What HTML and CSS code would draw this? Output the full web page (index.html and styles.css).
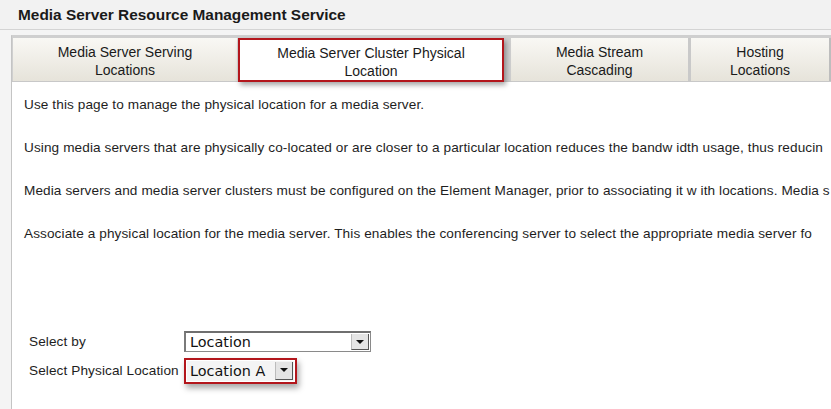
FILE: index.html
```html
<!DOCTYPE html>
<html>
<head>
<meta charset="utf-8">
<link rel="stylesheet" href="styles.css">
</head>
<body>
<div class="titlebar">Media Server Resource Management Service</div>
<div class="main">
  <div class="panel">
    <div class="tabs">
      <div class="tab t1">Media Server Serving<br>Locations</div>
      <div class="tab t2 active">Media Server Cluster Physical<br>Location</div>
      <div class="tab t3">Media Stream<br>Cascading</div>
      <div class="tab t4">Hosting<br>Locations</div>
    </div>
    <div class="content">
      <p>Use this page to manage the physical location for a media server.</p>
      <p>Using media servers that are physically co-located or are closer to a particular location reduces the bandw idth usage, thus reducin</p>
      <p>Media servers and media server clusters must be configured on the Element Manager, prior to associating it w ith locations. Media s</p>
      <p>Associate a physical location for the media server. This enables the conferencing server to select the appropriate media server fo</p>
      <div class="form">
        <div class="row">
          <span class="label">Select by</span>
          <div class="select wide"><span class="val">Location</span><span class="btn"><span class="tri"></span></span></div>
        </div>
        <div class="row">
          <span class="label">Select Physical Location</span>
          <div class="hl">
            <div class="select narrow"><span class="val">Location A</span><span class="btn"><span class="tri"></span></span></div>
          </div>
        </div>
      </div>
    </div>
  </div>
</div>
</body>
</html>
```

FILE: styles.css
```css
html, body {
  margin: 0;
  padding: 0;
  background: #f1f1f1;
  font-family: "Liberation Sans", Arial, sans-serif;
  color: #1e1e1e;
  overflow: hidden;
  height: 409px;
}
.titlebar {
  height: 29px;
  line-height: 29px;
  padding-left: 18px;
  font-weight: bold;
  font-size: 15.4px;
  color: #1a1a1a;
  background: #f2f2f2;
  border-bottom: 1px solid #d4d4d4;
}
.main {
  padding: 5px 0 0 11px;
  background: #f4f4f4;
  height: 374px;
  overflow: hidden;
}
.panel {
  background: #fff;
  border-left: 1px solid #c4c4c4;
  border-top: 1px solid #cfcfcf;
  height: 373px;
  overflow: hidden;
}
.tabs {
  display: flex;
  background: #cfcfcf;
  padding-top: 2px;
  padding-left: 1px;
  height: 43px;
  border-bottom: 1px solid #c8c8c8;
}
.tab {
  box-sizing: border-box;
  flex: none;
  height: 43px;
  padding-top: 5px;
  text-align: center;
  font-size: 14px;
  line-height: 18px;
  color: #1a1a1a;
  background: linear-gradient(#f9f8f4, #e6e3da);
  border-right: 2px solid #d2d2d2;
}
.t1 { width: 225px; border-right: 1px solid #d8d8d8; }
.t2 { width: 266px; }
.t3 { width: 180px; margin-left: 7px; border-right: 3px solid #c9c9c9; }
.t4 { width: 140px; border-right: 2px solid #bdbdbd; }
.tab.active {
  background: #fff;
  border: 2px solid #b3161c;
  padding-top: 4px;
  height: 44px;
  box-shadow: 2px 3px 5px rgba(0,0,0,0.35);
  position: relative;
  z-index: 1;
}
.content {
  padding: 15px 0 0 12px;
  font-size: 13.6px;
  letter-spacing: 0.1px;
  white-space: nowrap;
}
.content p {
  margin: 0 0 27px 0;
  line-height: 16px;
}
.form {
  padding-top: 58px;
  padding-left: 5px;
}
.row {
  display: flex;
  align-items: center;
  height: 29px;
}
.label {
  width: 155px;
  flex: none;
}
.select {
  box-sizing: border-box;
  display: flex;
  height: 21px;
  border: 1px solid #8a8a8a;
  border-top: 2px solid #6f6f6f;
  border-left: 2px solid #7a7a7a;
  background: #fff;
  font-family: "DejaVu Sans", Verdana, sans-serif;
  font-size: 14.4px;
  letter-spacing: 0;
  color: #111;
}
.select .val {
  flex: 1;
  padding-left: 4px;
  line-height: 18px;
}
.select .btn {
  width: 16px;
  background: #e4e4e4;
  border-left: 1px solid #bbb;
  border-right: 1px solid #555;
  border-bottom: 1px solid #555;
  display: flex;
  align-items: center;
  justify-content: center;
  margin: 1px;
}
.tri {
  width: 0;
  height: 0;
  border-left: 4px solid transparent;
  border-right: 4px solid transparent;
  border-top: 4px solid #111;
}
.wide { width: 187px; }
.hl {
  border: 2px solid #b3161c;
  padding: 1px;
  box-shadow: 2px 4px 6px rgba(0,0,0,0.35);
}
.narrow {
  width: 107px;
  height: 20px;
  border: none;
  background: #f4f4f4;
}
.narrow .val { padding-left: 3px; line-height: 20px; }
```
